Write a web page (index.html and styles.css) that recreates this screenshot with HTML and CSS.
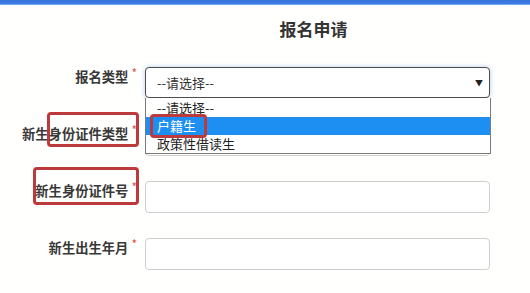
FILE: index.html
```html
<!DOCTYPE html>
<html lang="zh">
<head>
<meta charset="utf-8">
<link rel="stylesheet" href="styles.css">
</head>
<body>
<div class="topbar"></div>
<div class="form">
  <div class="label-cell"></div>
  <h2 class="title">报名申请</h2>

  <div class="label-cell"><span class="label">报名类型<span class="req">*</span></span></div>
  <div class="field">
    <div class="select">
      <span class="select-text">--请选择--</span>
      <span class="arrow">▼</span>
    </div>
    <div class="dropdown">
      <div class="option">--请选择--</div>
      <div class="option active"><span class="mark mark-opt">户籍生</span></div>
      <div class="option">政策性借读生</div>
    </div>
  </div>

  <div class="label-cell"><span class="label">新生<span class="mark mark-a">身份证件类型<span class="req">*</span></span></span></div>
  <div class="field"><div class="input"></div></div>

  <div class="label-cell"><span class="label"><span class="mark mark-b">新生身份证件号<span class="req">*</span></span></span></div>
  <div class="field"><div class="input"></div></div>

  <div class="label-cell"><span class="label">新生出生年月<span class="req">*</span></span></div>
  <div class="field"><div class="input"></div></div>
</div>
</body>
</html>
```

FILE: styles.css
```css
* { box-sizing: border-box; }
html, body { margin: 0; padding: 0; background: #fffffd; }
body {
  width: 530px;
  height: 293px;
  overflow: hidden;
  font-family: "Noto Sans CJK SC", "Noto Sans", sans-serif;
  color: #333;
}
.topbar {
  height: 5px;
  background: linear-gradient(#3572d8 0, #3d7fe4 75%, #9cc3f2 100%);
}
.form {
  display: grid;
  grid-template-columns: 145px 345px;
  grid-template-rows: 24px;
  grid-auto-rows: 31px;
  row-gap: 26px;
  padding-top: 12px;
}
.title {
  margin: 0;
  font-size: 17px;
  line-height: 24px;
  font-weight: 700;
  text-align: center;
  padding-right: 8px;
  color: #333;
  align-self: start;
}
.label-cell {
  display: flex;
  justify-content: flex-end;
  align-items: flex-start;
  padding-right: 8px;
}
.label {
  font-size: 13.3px;
  line-height: 20px;
  font-weight: 700;
  color: #383838;
  white-space: nowrap;
}
.req {
  color: #d9534f;
  font-size: 12px;
  font-weight: 400;
  vertical-align: top;
  line-height: 12px;
  margin-left: 3px;
}
.field { position: relative; }
.select {
  height: 31px;
  border: 1px solid #4d4d4d;
  border-radius: 4px;
  background: #fff;
  display: flex;
  align-items: center;
  justify-content: space-between;
  padding: 0 6px 0 11px;
  box-shadow: 0 0 5px rgba(90, 140, 220, 0.45);
  font-size: 13px;
  color: #333;
}
.arrow {
  font-size: 8px;
  color: #222;
}
.dropdown {
  position: absolute;
  left: 0;
  top: 31px;
  width: 346px;
  border: 1px solid #7a7a7a;
  border-top: none;
  background: #fff;
  z-index: 2;
  padding-top: 1px;
}
.option {
  height: 18px;
  line-height: 18px;
  font-size: 13px;
  padding-left: 11px;
  color: #222;
}
.option.active {
  background: #1e8ff2;
  color: #fff;
}
.input {
  height: 32px;
  border: 1px solid #cfcfcf;
  border-radius: 4px;
  background: #fff;
}
.mark {
  position: relative;
  display: inline-block;
}
.mark::after {
  content: "";
  position: absolute;
  border: 3px solid #bd3a3c;
  border-radius: 4px;
}
.mark-a::after { top: -12px; bottom: -3px; left: -2px; right: -2px; }
.mark-b::after { top: -14px; bottom: -4px; left: -2px; right: -2px; }
.mark-opt { height: 18px; }
.mark-opt::after { top: -3px; bottom: -3px; left: -7px; right: -11px; }
```
